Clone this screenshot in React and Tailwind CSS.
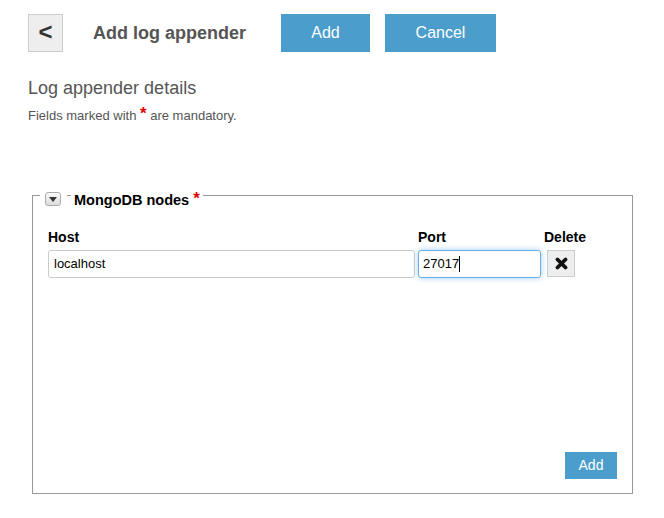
import React from "react";

export default function App() {
  const font = { fontFamily: '"Liberation Sans", Arial, sans-serif' };
  return (
    <div className="w-[664px] h-[518px] bg-white text-[#333] pt-[14px] pl-[28px]" style={font}>
      {/* header */}
      <div className="flex items-center h-[38px]">
        <button className="w-[35px] h-[38px] bg-[#eeeeee] border border-[#cccccc] flex items-center justify-center text-[24px] font-bold text-[#333] leading-none pb-[2px]">
          &lt;
        </button>
        <h1 className="ml-[30px] text-[18px] font-bold text-[#555] leading-[20px]">Add log appender</h1>
        <button className="ml-[35px] w-[89px] h-[38px] bg-[#4b9dcc] text-white text-[16px]">Add</button>
        <button className="ml-[15px] w-[111px] h-[38px] bg-[#4b9dcc] text-white text-[16px]">Cancel</button>
      </div>

      <h2 className="mt-[25px] text-[18px] leading-[22px] text-[#555]">Log appender details</h2>
      <p className="mt-[6px] text-[13px] leading-[16px] text-[#555]">
        Fields marked with <span className="text-[#d00] font-bold text-[17px] leading-none align-[1px]">*</span> are mandatory.
      </p>

      <fieldset className="mt-[63px] ml-[4px] w-[601px] h-[307px] border border-[#999999] flex flex-col">
        <legend className="ml-[7px] pl-[5px] pr-[3px]">
          <span className="flex items-center h-[16px]">
            <span className="relative top-[4px] w-[16px] h-[14px] border border-[#aaa] rounded-[3px] bg-gradient-to-b from-[#fafafa] to-[#dedede] flex items-center justify-center">
              <svg width="8" height="5" viewBox="0 0 8 5"><path d="M0 0 L8 0 L4 5 Z" fill="#333" /></svg>
            </span>
            <span className="ml-[6px] w-[4px] h-px bg-[#999]" />
            <span className="relative top-[5px] ml-[3px] text-[14.5px] font-bold text-black leading-[16px]">MongoDB nodes</span>
            <span className="relative top-[3px] ml-[4px] text-[#d00] font-bold text-[17px] leading-none">*</span>
          </span>
        </legend>

        <div className="flex flex-col flex-1 px-[15px] pt-[26px] pb-[14px]">
          <div className="grid grid-cols-[367px_123px_auto] gap-x-[3px] text-[14px] font-bold text-black leading-[16px]">
            <div>Host</div>
            <div>Port</div>
            <div>Delete</div>
          </div>
          <div className="mt-[5px] grid grid-cols-[367px_123px_auto] gap-x-[3px] items-start">
            <div className="h-[28px] border border-[#ccc] rounded-[3px] flex items-center px-[5px] text-[13px] text-black">localhost</div>
            <div className="h-[28px] border border-[#66afe9] rounded-[3px] flex items-center px-[4px] text-[13px] text-black shadow-[0_0_6px_rgba(102,175,233,0.6)]">
              27017<span className="inline-block w-px h-[16px] bg-black" />
            </div>
            <div className="ml-[3px] w-[28px] h-[27px] bg-[#eeeeee] border border-[#ccc] flex items-center justify-center">
              <svg width="13" height="13" viewBox="0 0 13 13">
                <path d="M2.5 2.5 L10.5 10.5 M10.5 2.5 L2.5 10.5" stroke="#111" strokeWidth="3.8" strokeLinecap="round" />
              </svg>
            </div>
          </div>
          <div className="mt-auto flex justify-end">
            <button className="w-[52px] h-[27px] bg-[#4b9dcc] text-white text-[14px]">Add</button>
          </div>
        </div>
      </fieldset>
    </div>
  );
}
